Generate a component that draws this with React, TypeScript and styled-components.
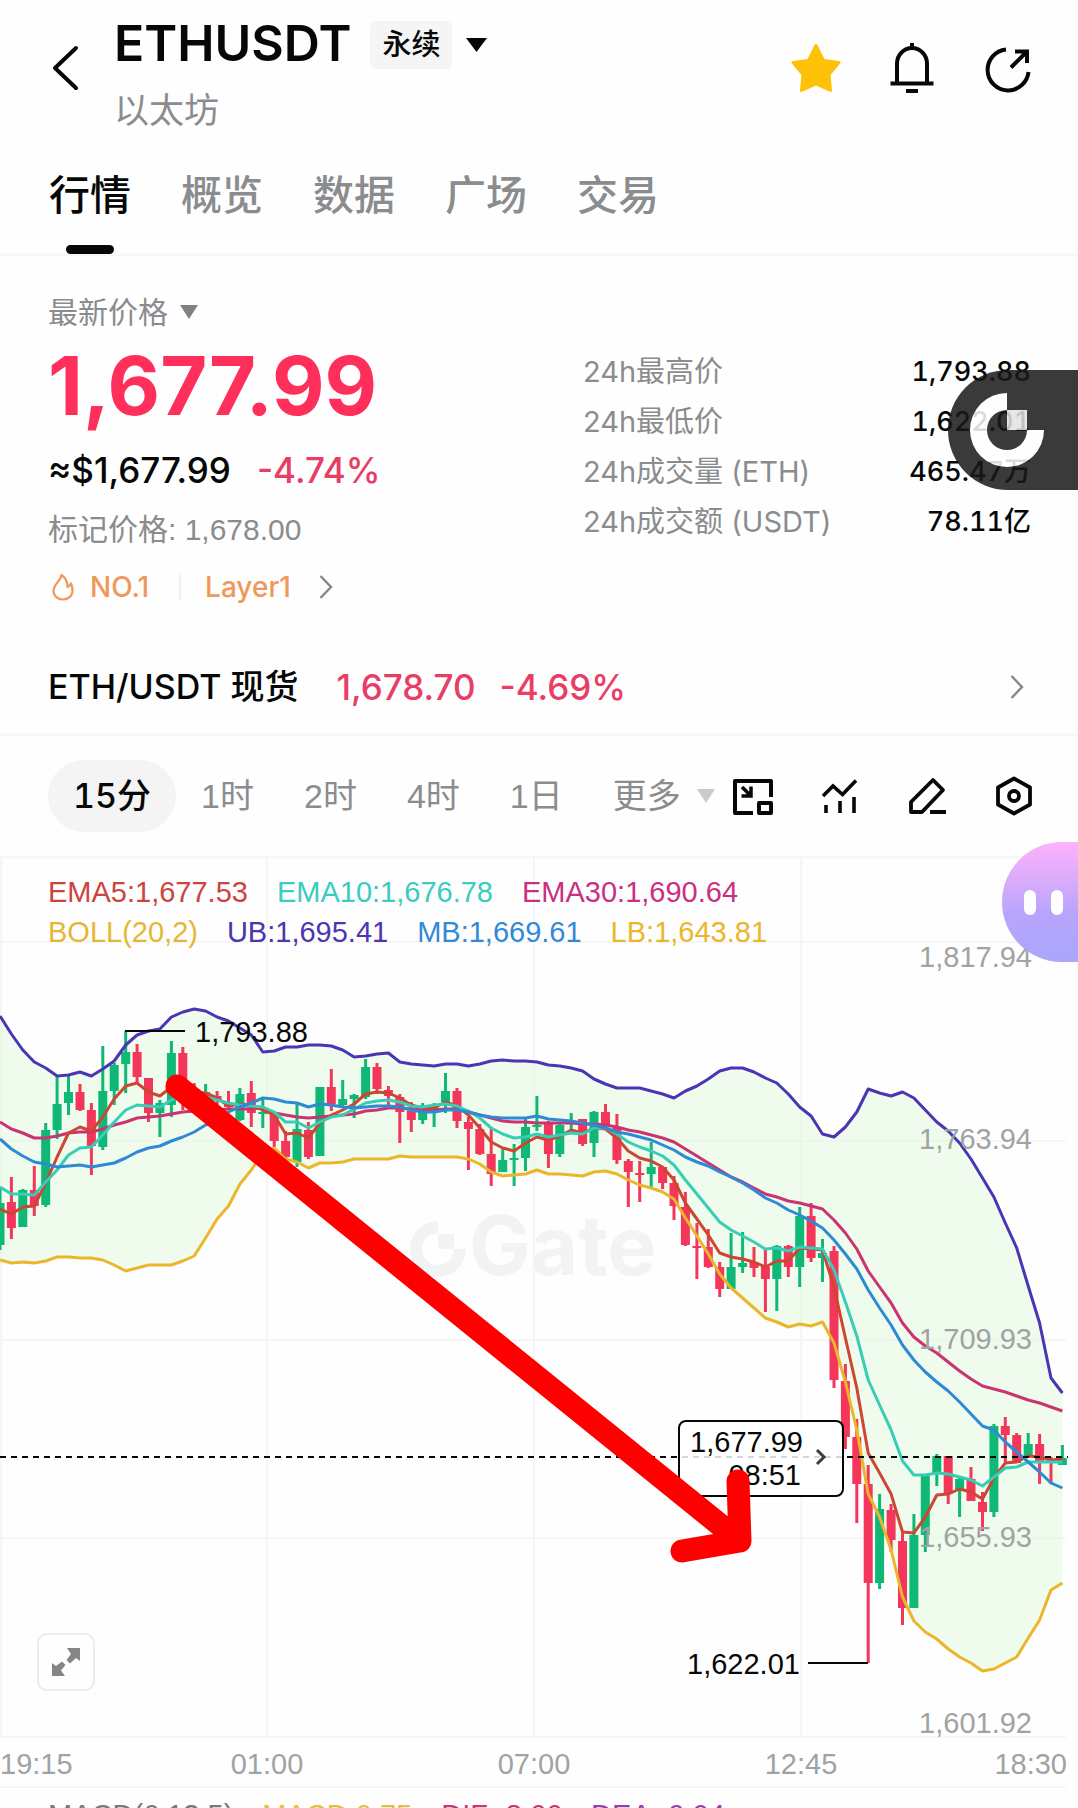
import React from "react";
import styled, { createGlobalStyle } from "styled-components";

const GlobalStyle = createGlobalStyle`
  * { box-sizing: border-box; }
  html, body { margin: 0; padding: 0; background: #fefefe; }
  body, button {
    font-family: Inter, "Noto Sans CJK SC", "Liberation Sans", sans-serif;
  }
  button {
    margin: 0; padding: 0; border: 0; background: none;
    color: inherit; cursor: pointer;
  }
  svg { display: block; }
`;

const INK = "#060808";
const MUTED = "#8a8c8e";
const FALL = "#e83e66";
const HAIRLINE = "#f6f7f7";
const PLAIN_FONT = '"Liberation Sans", "Noto Sans CJK SC", Arial, sans-serif';

const Page = styled.main`
  position: relative;
  height: 100vh;
  overflow: hidden;
  background: #fefefe;
  color: ${INK};
`;

/* ---------- header ---------- */

const Header = styled.header`
  display: flex;
  align-items: center;
  height: 136px;
  padding: 0 44px 0 46px;
`;

const IconButton = styled.button`
  flex: none;
  display: flex;
  align-items: center;
  justify-content: center;
`;

const TitleBlock = styled.div`
  flex: 1;
  margin-left: 28px;
`;

const TitleRow = styled.div`
  display: flex;
  align-items: center;
  height: 84px;
`;

const Title = styled.h1`
  margin: 0;
  font-size: 50px;
  line-height: 84px;
  font-weight: 600;
`;

const ContractSwitch = styled.button`
  display: flex;
  align-items: center;
  gap: 14px;
  margin: 4px 0 0 19px;
`;

const Badge = styled.span`
  padding: 0 12px;
  border-radius: 6px;
  background: #f5f5f5;
  font-size: 29px;
  line-height: 48px;
  font-weight: 500;
`;

const Subtitle = styled.div`
  color: ${MUTED};
  font-size: 35px;
  line-height: 50px;
`;

const HeaderActions = styled.div`
  display: flex;
  gap: 44px;
`;

/* ---------- tabs ---------- */

const Tabs = styled.nav`
  display: flex;
  gap: 50px;
  padding: 0 49px;
  border-bottom: 2px solid ${HAIRLINE};
`;

const Tab = styled.button<{ $active?: boolean }>`
  position: relative;
  color: ${(p) => (p.$active ? INK : MUTED)};
  font-size: 41px;
  line-height: 118px;
  font-weight: 500;
  &::after {
    content: "";
    display: ${(p) => (p.$active ? "block" : "none")};
    position: absolute;
    left: calc(50% - 24px);
    bottom: 0;
    width: 48px;
    height: 9px;
    border-radius: 5px;
    background: ${INK};
  }
`;

/* ---------- price summary ---------- */

const Summary = styled.section`
  display: grid;
  grid-template-columns: 535fr 448fr;
  padding: 32px 47px 0 48px;
`;

const PriceKind = styled.button`
  display: flex;
  align-items: center;
  gap: 12px;
  color: ${MUTED};
  font-size: 30px;
  line-height: 48px;
`;

const LastPrice = styled.div`
  color: #ff2f5b;
  font-size: 81px;
  line-height: 100px;
  font-weight: 700;
`;

const FiatRow = styled.div`
  display: flex;
  gap: 26px;
  font-size: 35px;
  line-height: 68px;
  font-weight: 500;
`;

const Fall = styled.span`
  color: ${FALL};
`;

const MarkPrice = styled.div`
  color: ${MUTED};
  font-family: ${PLAIN_FONT};
  font-size: 30px;
  line-height: 52px;
`;

const TagRow = styled.a`
  display: flex;
  align-items: center;
  height: 62px;
  color: #f0985a;
  font-size: 28px;
  font-weight: 500;
  text-decoration: none;
`;

const TagText = styled.span`
  margin-left: 12px;
`;

const TagDivider = styled.i`
  width: 2px;
  height: 28px;
  margin: 0 12px 0 30px;
  background: #f1f1f1;
`;

const TagChevron = styled.span`
  margin-left: 28px;
`;

const Stats = styled.dl`
  margin: 59px 0 0;
`;

const Stat = styled.div`
  display: flex;
  justify-content: space-between;
  line-height: 50px;
`;

const StatName = styled.dt`
  color: ${MUTED};
  font-size: 29px;
`;

const StatValue = styled.dd`
  margin: 0;
  font-size: 27px;
  font-weight: 500;
  font-variant-numeric: tabular-nums;
`;

/* ---------- spot pair ---------- */

const SpotRow = styled.a`
  display: flex;
  align-items: center;
  height: 118px;
  padding: 22px 54px 0 48px;
  border-bottom: 2px solid ${HAIRLINE};
  color: ${INK};
  font-weight: 500;
  line-height: 48px;
  text-decoration: none;
`;

const SpotName = styled.span`
  margin-right: 38px;
  font-size: 34px;
`;

const SpotNumber = styled.span`
  margin-right: 24px;
  color: ${FALL};
  font-size: 35px;
`;

const SpotChevron = styled.span`
  margin-left: auto;
`;

/* ---------- interval toolbar ---------- */

const Toolbar = styled.div`
  display: flex;
  align-items: center;
  justify-content: space-between;
  height: 122px;
  padding: 0 44px 0 48px;
  border-bottom: 2px solid ${HAIRLINE};
`;

const Intervals = styled.div`
  display: flex;
`;

const Interval = styled.button<{ $active?: boolean }>`
  display: flex;
  align-items: center;
  gap: 16px;
  padding: 0 25px;
  border-radius: 36px;
  background: ${(p) => (p.$active ? "#f4f4f4" : "transparent")};
  color: ${(p) => (p.$active ? INK : MUTED)};
  font-family: ${(p) => (p.$active ? 'Inter, "Noto Sans CJK SC", sans-serif' : PLAIN_FONT)};
  font-size: 34px;
  font-weight: ${(p) => (p.$active ? 500 : 400)};
  font-variant-numeric: tabular-nums;
  line-height: 72px;
  white-space: nowrap;
  &:last-child { padding-right: 0; }
`;

const Tools = styled.div`
  display: flex;
  gap: 47px;
`;

/* ---------- chart ---------- */

const ChartBox = styled.section`
  position: relative;
`;

const ChartSvg = styled.svg`
  width: 100%;
  height: auto;
  text {
    font-family: "Liberation Sans", Arial, sans-serif;
    font-size: 29px;
  }
  text.watermark {
    font-family: Inter, "Liberation Sans", sans-serif;
    font-size: 82px;
    font-weight: 700;
  }
`;

const Legend = styled.div`
  position: absolute;
  top: 14px;
  left: 48px;
`;

const LegendRow = styled.div`
  display: flex;
  gap: 29px;
  font-family: ${PLAIN_FONT};
  font-size: 29px;
  line-height: 40px;
  white-space: nowrap;
`;

const LegendItem = styled.span<{ $color: string }>`
  color: ${(p) => p.$color};
`;

const ExpandButton = styled.button`
  position: absolute;
  left: 37px;
  bottom: 97px;
  display: flex;
  align-items: center;
  justify-content: center;
  width: 58px;
  height: 58px;
  border: 2px solid #ececec;
  border-radius: 10px;
  background: #fefefe;
`;

const MacdRow = styled(LegendRow)`
  padding: 0 48px;
  line-height: 54px;
`;

/* ---------- floating shortcuts ---------- */

const Floating = styled.button<{ $top: number; $width: number; $fill: string; $opacity: number }>`
  position: absolute;
  top: ${(p) => p.$top}px;
  right: 0;
  display: flex;
  align-items: center;
  width: ${(p) => p.$width}px;
  height: 120px;
  padding-left: 22px;
  border-radius: 60px 0 0 60px;
  background: ${(p) => p.$fill};
  opacity: ${(p) => p.$opacity};
`;

const Eye = styled.i`
  width: 12px;
  height: 25px;
  margin-right: 15px;
  border-radius: 6px;
  background: #fff;
`;

/* ---------- icons ---------- */

const Caret = ({ size, color }: { size: number; color: string }) => (
  <svg width={size} height="14" viewBox="0 0 20 14" preserveAspectRatio="none" aria-hidden>
    <path d="M0 0H20L10 14Z" fill={color} />
  </svg>
);

const Chevron = () => (
  <svg width="14" height="24" viewBox="0 0 14 24" fill="none" aria-hidden>
    <path d="M1.500 1L12 12L1.500 23" stroke="#85888a" strokeWidth="2.400" />
  </svg>
);

const BackIcon = () => (
  <svg width="40" height="48" viewBox="0 0 40 48" fill="none" aria-hidden>
    <path d="M30 4L9 24L30 44" stroke={INK} strokeWidth="4" strokeLinecap="round" strokeLinejoin="round" />
  </svg>
);

const StarIcon = () => (
  <svg width="52" height="52" viewBox="0 0 52 52" aria-hidden>
    <path
      d="M26 3.500L33.500 18.500L49 20.500L39 32.500L40.500 48.500L26 42L11.500 48.500L13 32.500L3 20.500L18.500 18.500Z"
      fill="#ffc00a" stroke="#ffc00a" strokeWidth="3" strokeLinejoin="round"
    />
  </svg>
);

const BellIcon = () => (
  <svg width="52" height="52" viewBox="0 0 52 52" fill="none" stroke={INK} strokeWidth="4" aria-hidden>
    <path d="M26 1V6M11 41V21.500A15 15.500 0 0 1 41 21.500V41M4.500 41.500H47.500M20 49H32" />
  </svg>
);

const ShareIcon = () => (
  <svg width="52" height="52" viewBox="0 0 52 52" fill="none" stroke={INK} strokeWidth="4" aria-hidden>
    <path d="M24 7.500A20.500 20.500 0 1 0 46.500 30M33 9.500H45V21M44.500 10L29 25.500" />
  </svg>
);

const FlameIcon = () => (
  <svg width="30" height="30" viewBox="0 0 30 30" fill="none" aria-hidden>
    <path
      d="M13.500 3C13 9 5.500 12 5.500 19C5.500 24 10 27.500 15 27.500C20 27.500 24.500 24 24.500 19C24.500 15.500 24 13.500 23 11.500C22 13.500 21 14.500 19.500 15C19.500 9 17.500 5.500 13.500 3Z"
      stroke="#f0985a" strokeWidth="2.200" strokeLinejoin="round"
    />
  </svg>
);

const LayoutIcon = () => (
  <svg width="40" height="40" viewBox="0 0 40 40" fill="none" stroke={INK} strokeWidth="4" aria-hidden>
    <path d="M20 37H2V5H38V21" strokeLinejoin="round" />
    <rect x="26" y="27" width="12" height="10" strokeLinejoin="round" />
    <path d="M9 11L17 19M18 10.500V20H8.500" strokeWidth="3.500" />
  </svg>
);

const IndicatorIcon = () => (
  <svg width="40" height="40" viewBox="0 0 40 40" fill="none" stroke={INK} strokeWidth="3.600" aria-hidden>
    <path d="M3 20L13 10L22.500 18.500L36 4.500M6 29V37M20 25V37M34 21V37" />
  </svg>
);

const PenIcon = () => (
  <svg width="40" height="40" viewBox="0 0 40 40" fill="none" stroke={INK} strokeWidth="3.800" strokeLinejoin="round" aria-hidden>
    <path d="M26 4L36 14L15 36H4V26ZM23 36H39" />
  </svg>
);

const HexIcon = () => (
  <svg width="40" height="40" viewBox="0 0 40 40" fill="none" stroke={INK} strokeWidth="3.800" strokeLinejoin="round" aria-hidden>
    <path d="M20 2.500L36 11.500V28.500L20 37.500L4 28.500V11.500Z" />
    <circle cx="20" cy="20" r="5" />
  </svg>
);

const ExpandIcon = () => (
  <svg width="28" height="28" viewBox="0 0 28 28" fill="#858585" aria-hidden>
    <path d="M15 0H28V13L24 10L18 15.500L14.500 12L19 6Z" />
    <path d="M0 15L4 18L10 13.500L13.500 17L9 22.500L13 28H0Z" />
  </svg>
);

const GateMark = () => (
  <svg width="74" height="74" viewBox="0 0 74 74" fill="#fff" aria-hidden>
    <path d="M37 0A37 37 0 1 0 74 37H57A20 20 0 1 1 37 17Z" />
    <rect x="37" y="17" width="20" height="20" opacity="0.880" />
  </svg>
);

/* ---------- chart data: [high, open/close top, open/close bottom, low, rising] ---------- */

type Candle = [number, number, number, number, 0 | 1];

const CANDLES: Candle[] = [
  [329, 345, 387, 392, 1], [319, 344, 370, 381, 0], [331, 332, 369, 369, 1], [308, 332, 348, 358, 0],
  [265, 272, 347, 349, 1], [217, 246, 272, 281, 1], [217, 234, 245, 257, 1], [226, 234, 252, 253, 0],
  [245, 252, 288, 317, 0], [188, 233, 289, 292, 1], [205, 207, 233, 247, 1], [173, 194, 206, 235, 1],
  [186, 194, 219, 226, 0], [220, 220, 255, 264, 0], [242, 245, 255, 279, 1], [183, 195, 247, 259, 1],
  [189, 195, 240, 252, 0], [225, 235, 250, 252, 0], [226, 234, 248, 250, 1], [233, 238, 241, 249, 0],
  [233, 246, 249, 250, 0], [230, 236, 262, 263, 1], [223, 235, 255, 269, 0], [241, 254, 256, 270, 1],
  [254, 255, 283, 289, 0], [273, 283, 299, 302, 0], [244, 271, 304, 309, 1], [264, 272, 299, 301, 0],
  [229, 229, 298, 298, 1], [211, 229, 246, 253, 0], [222, 241, 247, 249, 1], [236, 237, 241, 260, 1],
  [201, 209, 239, 241, 1], [205, 209, 231, 236, 0], [228, 232, 238, 248, 0], [236, 239, 254, 285, 0],
  [244, 253, 262, 274, 0], [245, 254, 262, 266, 1], [245, 249, 251, 269, 1], [215, 233, 244, 255, 1],
  [230, 233, 263, 270, 0], [259, 264, 271, 312, 0], [266, 271, 296, 297, 0], [269, 296, 316, 328, 0],
  [291, 302, 314, 314, 1], [286, 300, 302, 328, 1], [261, 269, 300, 313, 1], [238, 267, 269, 273, 1],
  [263, 264, 296, 310, 0], [266, 267, 296, 299, 1], [255, 264, 266, 276, 1], [261, 261, 286, 288, 0],
  [253, 254, 285, 299, 1], [246, 254, 267, 269, 0], [256, 270, 302, 306, 0], [301, 303, 314, 349, 0],
  [303, 315, 317, 344, 0], [284, 309, 316, 330, 1], [309, 309, 325, 331, 0], [318, 325, 348, 362, 0],
  [334, 349, 387, 388, 0], [365, 388, 390, 421, 0], [371, 389, 409, 410, 0], [404, 409, 431, 439, 0],
  [375, 409, 431, 431, 1], [374, 405, 409, 415, 1], [389, 404, 410, 419, 0], [391, 409, 421, 454, 0],
  [387, 388, 421, 453, 1], [387, 388, 409, 419, 0], [349, 358, 409, 429, 1], [345, 358, 400, 404, 0],
  [381, 395, 400, 424, 1], [388, 393, 522, 530, 0], [506, 523, 579, 591, 0], [561, 579, 626, 665, 0],
  [607, 626, 725, 805, 0], [636, 651, 725, 731, 1], [646, 652, 682, 694, 0], [675, 683, 750, 767, 0],
  [656, 677, 750, 750, 1], [616, 617, 677, 694, 1], [596, 598, 616, 628, 1], [598, 598, 636, 646, 0],
  [618, 621, 632, 659, 1], [609, 621, 643, 643, 0], [634, 644, 654, 673, 0], [566, 568, 654, 659, 1],
  [559, 568, 577, 604, 0], [575, 577, 605, 605, 0], [575, 586, 599, 600, 1], [576, 586, 603, 626, 0],
  [599, 601, 603, 626, 0], [587, 600, 607, 607, 1],
];

const UPPER = [
  158, 176, 192, 204, 210, 218, 217, 214, 218, 211, 203, 187, 177, 173, 171, 159, 154, 151, 153, 159,
  163, 170, 177, 194, 193, 189, 189, 187, 187, 188, 192, 199, 198, 196, 195, 204, 206, 207, 208, 206,
  206, 208, 206, 203, 202, 203, 203, 204, 207, 208, 210, 213, 221, 226, 230, 230, 230, 233, 236, 240,
  233, 228, 221, 213, 210, 210, 214, 220, 225, 236, 249, 258, 276, 279, 269, 254, 231, 235, 238, 234,
  240, 252, 264, 273, 285, 301, 320, 339, 365, 390, 428, 465, 520, 535,
];

const LOWER = [
  402, 405, 404, 405, 403, 399, 399, 400, 400, 402, 407, 413, 410, 407, 407, 407, 403, 398, 380, 361,
  348, 326, 312, 295, 290, 301, 304, 310, 305, 305, 304, 301, 301, 301, 301, 298, 299, 299, 299, 299,
  299, 301, 306, 314, 318, 317, 316, 312, 316, 316, 317, 318, 314, 313, 316, 322, 327, 330, 334, 341,
  360, 378, 396, 416, 430, 440, 450, 460, 464, 469, 466, 468, 464, 485, 524, 572, 636, 659, 692, 739,
  763, 774, 781, 791, 799, 805, 813, 811, 805, 799, 780, 762, 732, 725,
];

const MIDDLE = [
  281, 291, 298, 304, 306, 309, 308, 307, 309, 307, 305, 300, 294, 290, 288, 283, 279, 274, 267, 262,
  254, 249, 245, 240, 241, 244, 245, 249, 246, 247, 249, 250, 249, 248, 248, 249, 252, 254, 254, 252,
  252, 254, 257, 259, 260, 260, 260, 258, 261, 262, 263, 265, 267, 270, 274, 276, 279, 282, 287, 292,
  299, 304, 308, 314, 319, 325, 332, 340, 345, 352, 357, 363, 370, 382, 396, 411, 432, 450, 467, 487,
  502, 514, 524, 533, 544, 556, 568, 572, 584, 594, 604, 614, 625, 630,
];

const EMA30 = [
  264, 271, 275, 280, 280, 278, 275, 274, 274, 271, 267, 264, 260, 259, 258, 256, 254, 253, 253, 252,
  251, 251, 251, 250, 255, 257, 259, 260, 259, 258, 257, 256, 253, 252, 250, 250, 251, 252, 252, 251,
  251, 254, 257, 260, 263, 264, 264, 265, 265, 265, 265, 266, 266, 267, 269, 272, 274, 277, 280, 284,
  291, 298, 305, 312, 319, 324, 330, 336, 339, 343, 345, 348, 351, 362, 375, 391, 413, 429, 445, 465,
  479, 488, 495, 504, 513, 521, 528, 531, 534, 538, 542, 545, 549, 553,
];

const EMA10 = [
  329, 336, 336, 337, 324, 312, 297, 290, 289, 277, 264, 252, 247, 248, 249, 242, 237, 237, 239, 242,
  245, 247, 248, 249, 254, 264, 264, 270, 264, 259, 257, 251, 245, 243, 242, 244, 248, 249, 247, 246,
  248, 253, 260, 270, 276, 280, 279, 276, 279, 277, 275, 276, 270, 270, 276, 284, 289, 293, 298, 307,
  322, 336, 350, 364, 372, 378, 384, 391, 390, 393, 389, 390, 391, 412, 444, 478, 522, 547, 572, 603,
  617, 617, 615, 616, 619, 622, 628, 619, 610, 609, 604, 604, 604, 604,
];

const EMA5 = [
  351, 356, 349, 348, 325, 299, 275, 269, 273, 259, 241, 228, 225, 234, 238, 229, 230, 234, 235, 240,
  248, 246, 247, 252, 257, 276, 275, 280, 265, 257, 252, 246, 236, 234, 235, 240, 247, 250, 250, 244,
  248, 257, 270, 284, 290, 293, 285, 279, 282, 278, 272, 275, 270, 271, 280, 293, 300, 303, 309, 322,
  345, 361, 377, 395, 399, 401, 404, 409, 403, 403, 390, 391, 392, 429, 480, 530, 595, 615, 636, 674,
  675, 659, 637, 636, 631, 634, 641, 620, 605, 604, 598, 599, 602, 601,
];

const STEP = 11.424;
const px = (i: number) => Math.round(i * STEP * 10) / 10;
const points = (ys: number[]) => ys.map((y, i) => `${px(i)},${y}`);

const CURVES = [
  { ys: UPPER, color: "#4a35b5" },
  { ys: EMA30, color: "#cb3470" },
  { ys: EMA5, color: "#cd4632" },
  { ys: EMA10, color: "#38cdb6" },
  { ys: MIDDLE, color: "#2f8ad6" },
  { ys: LOWER, color: "#ebb62c" },
];

const PRICE_AXIS = [
  { label: "1,817.94", line: 84, base: 109 },
  { label: "1,763.94", line: 283, base: 291 },
  { label: "1,709.93", line: 482, base: 491 },
  { label: "1,655.93", line: 680, base: 689 },
  { label: "1,601.92", line: 879, base: 875 },
];

const TIME_AXIS: { label: string; x: number; anchor: "start" | "middle" | "end" }[] = [
  { label: "19:15", x: 0, anchor: "start" },
  { label: "01:00", x: 267, anchor: "middle" },
  { label: "07:00", x: 534, anchor: "middle" },
  { label: "12:45", x: 801, anchor: "middle" },
  { label: "18:30", x: 1067, anchor: "end" },
];

const Chart = () => (
  <ChartSvg viewBox="0 0 1078 930" role="img" aria-label="ETHUSDT 15分 K线">
    <g stroke="#f5f7f7" strokeWidth="2">
      {PRICE_AXIS.map((a) => <line key={a.label} x1="0" x2="1066" y1={a.line} y2={a.line} />)}
      {[1, 267, 534, 801].map((x) => <line key={x} x1={x} x2={x} y1="0" y2="879" />)}
      <line x1="0" x2="1066" y1="929" y2="929" />
    </g>

    <g fill="#f2f4f4">
      <path d="M438 363A28 28 0 1 0 466 391H454A16 16 0 1 1 438 375Z" />
      <rect x="438" y="376" width="16" height="15" />
      <text className="watermark" x="469" y="417">Gate</text>
    </g>

    <polygon
      points={[...points(UPPER), ...points(LOWER).reverse()].join(" ")}
      fill="#e4f9df"
      fillOpacity="0.600"
    />

    {CANDLES.map(([high, top, bottom, low, up], i) => (
      <g key={i} fill={up ? "#0fb877" : "#f4365a"}>
        <rect x={px(i) - 1.5} y={high} width="3" height={low - high} />
        <rect x={px(i) - 4.5} y={top} width="9" height={Math.max(bottom - top, 2)} />
      </g>
    ))}

    {CURVES.map((c) => (
      <polyline
        key={c.color}
        points={points(c.ys).join(" ")}
        fill="none"
        stroke={c.color}
        strokeWidth="3"
        strokeLinejoin="round"
      />
    ))}

    <g fill="#9fa3a3">
      {PRICE_AXIS.map((a) => <text key={a.label} x="1032" y={a.base} textAnchor="end">{a.label}</text>)}
      {TIME_AXIS.map((t) => <text key={t.label} x={t.x} y="916" textAnchor={t.anchor}>{t.label}</text>)}
    </g>

    <line x1="0" x2="1068" y1="599" y2="599" stroke={INK} strokeWidth="2" strokeDasharray="6 5" />

    <g stroke={INK} strokeWidth="2">
      <line x1="125" x2="185" y1="173" y2="173" />
      <line x1="808" x2="868" y1="805" y2="805" />
      <rect x="679" y="563" width="164" height="75" rx="7" fill="#fff" fillOpacity="0.840" />
    </g>
    <g fill={INK}>
      <text x="195" y="184">1,793.88</text>
      <text x="687" y="816">1,622.01</text>
      <text x="803" y="594" textAnchor="end">1,677.99</text>
      <text x="801" y="627" textAnchor="end">08:51</text>
    </g>
    <path d="M817 592L824 599L817 606" fill="none" stroke="#3c3c3c" strokeWidth="3" />

    <path
      d="M177 228L740 683M738 623L740 683L682 693"
      fill="none"
      stroke="#ff0000"
      strokeWidth="23"
      strokeLinecap="round"
      strokeLinejoin="round"
    />
  </ChartSvg>
);

const TABS = ["行情", "概览", "数据", "广场", "交易"];

const STATS = [
  ["24h最高价", "1,793.88"],
  ["24h最低价", "1,622.01"],
  ["24h成交量 (ETH)", "465.47万"],
  ["24h成交额 (USDT)", "78.11亿"],
];

const INTERVALS = ["15分", "1时", "2时", "4时", "1日"];

const LEGEND = [
  [
    ["EMA5:1,677.53", "#cc4440"],
    ["EMA10:1,676.78", "#3accc0"],
    ["EMA30:1,690.64", "#cb2f82"],
  ],
  [
    ["BOLL(20,2)", "#e6b733"],
    ["UB:1,695.41", "#4d35b0"],
    ["MB:1,669.61", "#3389d8"],
    ["LB:1,643.81", "#ebb62c"],
  ],
];

const MACD = [
  ["MACD(6,13,5)", "#77797a"],
  ["MACD:0.75", "#e6bf42"],
  ["DIF:-8.66", "#c93478"],
  ["DEA:-9.04", "#9440ae"],
];

export default function App() {
  return (
    <Page>
      <GlobalStyle />
      <Header>
        <IconButton aria-label="返回"><BackIcon /></IconButton>
        <TitleBlock>
          <TitleRow>
            <Title>ETHUSDT</Title>
            <ContractSwitch>
              <Badge>永续</Badge>
              <Caret size={21} color={INK} />
            </ContractSwitch>
          </TitleRow>
          <Subtitle>以太坊</Subtitle>
        </TitleBlock>
        <HeaderActions>
          <IconButton aria-label="收藏"><StarIcon /></IconButton>
          <IconButton aria-label="提醒"><BellIcon /></IconButton>
          <IconButton aria-label="分享"><ShareIcon /></IconButton>
        </HeaderActions>
      </Header>

      <Tabs>
        {TABS.map((t, i) => <Tab key={t} $active={i === 0}>{t}</Tab>)}
      </Tabs>

      <Summary>
        <div>
          <PriceKind>最新价格<Caret size={18} color="#7f8284" /></PriceKind>
          <LastPrice>1,677.99</LastPrice>
          <FiatRow><span>≈$1,677.99</span><Fall>-4.74%</Fall></FiatRow>
          <MarkPrice>标记价格: 1,678.00</MarkPrice>
          <TagRow href="#rank">
            <FlameIcon />
            <TagText>NO.1</TagText>
            <TagDivider />
            <TagText>Layer1</TagText>
            <TagChevron><Chevron /></TagChevron>
          </TagRow>
        </div>
        <Stats>
          {STATS.map(([name, value]) => (
            <Stat key={name}>
              <StatName>{name}</StatName>
              <StatValue>{value}</StatValue>
            </Stat>
          ))}
        </Stats>
      </Summary>

      <SpotRow href="#spot">
        <SpotName>ETH/USDT 现货</SpotName>
        <SpotNumber>1,678.70</SpotNumber>
        <SpotNumber>-4.69%</SpotNumber>
        <SpotChevron><Chevron /></SpotChevron>
      </SpotRow>

      <Toolbar>
        <Intervals>
          {INTERVALS.map((t, i) => <Interval key={t} $active={i === 0}>{t}</Interval>)}
          <Interval>更多<Caret size={18} color="#c9cbcb" /></Interval>
        </Intervals>
        <Tools>
          <IconButton aria-label="布局"><LayoutIcon /></IconButton>
          <IconButton aria-label="指标"><IndicatorIcon /></IconButton>
          <IconButton aria-label="画线"><PenIcon /></IconButton>
          <IconButton aria-label="设置"><HexIcon /></IconButton>
        </Tools>
      </Toolbar>

      <ChartBox>
        <Chart />
        <Legend>
          {LEGEND.map((row, i) => (
            <LegendRow key={i}>
              {row.map(([label, color]) => <LegendItem key={label} $color={color}>{label}</LegendItem>)}
            </LegendRow>
          ))}
        </Legend>
        <ExpandButton aria-label="全屏"><ExpandIcon /></ExpandButton>
      </ChartBox>

      <MacdRow>
        {MACD.map(([label, color]) => <LegendItem key={label} $color={color}>{label}</LegendItem>)}
      </MacdRow>

      <Floating $top={370} $width={130} $fill="#181818" $opacity={0.85} aria-label="Gate">
        <GateMark />
      </Floating>
      <Floating
        $top={842}
        $width={76}
        $fill="linear-gradient(180deg, #fdb0fb 0%, #d5a9fb 35%, #b5a2fc 60%, #a7a5fd 100%)"
        $opacity={0.97}
        aria-label="助手"
      >
        <Eye /><Eye />
      </Floating>
    </Page>
  );
}
